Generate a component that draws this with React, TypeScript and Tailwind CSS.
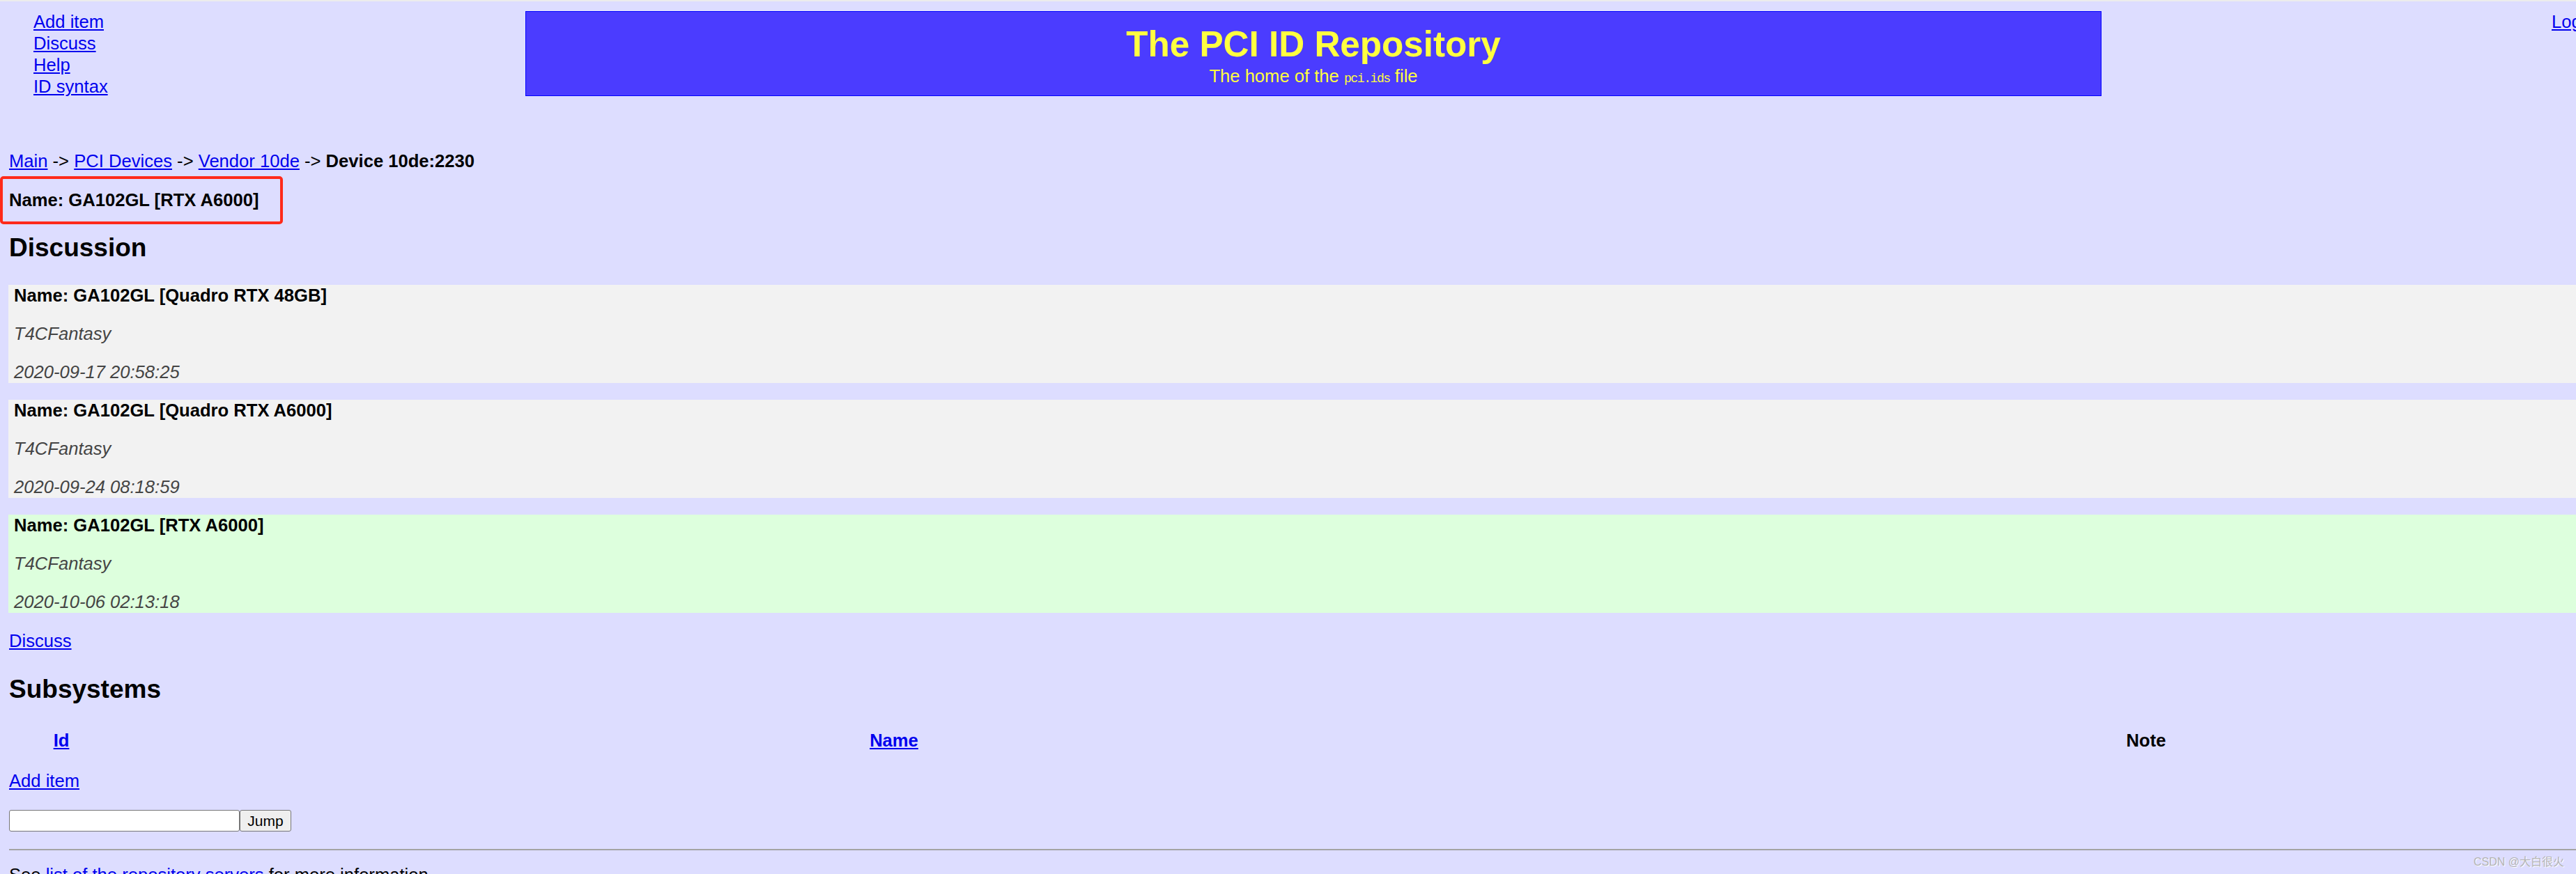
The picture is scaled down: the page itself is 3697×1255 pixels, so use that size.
const link = 'text-[#0000ee] underline'

const comments = [
    { name: 'GA102GL [Quadro RTX 48GB]', author: 'T4CFantasy', time: '2020-09-17 20:58:25', bg: 'bg-[#f2f2f2]' },
    { name: 'GA102GL [Quadro RTX A6000]', author: 'T4CFantasy', time: '2020-09-24 08:18:59', bg: 'bg-[#f2f2f2]' },
    { name: 'GA102GL [RTX A6000]', author: 'T4CFantasy', time: '2020-10-06 02:13:18', bg: 'bg-[#ddffdd]' },
]

function Comment({ name, author, time, bg }: { name: string; author: string; time: string; bg: string }) {
    return (
        <div className={`flex flex-col gap-[24px] pl-[8px] ${bg}`}>
            <p className="font-bold">Name: {name}</p>
            <p className="italic text-[#444]">{author}</p>
            <p className="italic text-[#444]">{time}</p>
        </div>
    )
}

export default function App() {
    return (
        <div className="relative h-[1255px] w-[3697px] overflow-hidden border-t-2 border-[#ececec] bg-[#ddddff] pl-[13px] font-['Liberation_Sans','Noto_Sans_CJK_SC',sans-serif] text-[25.6px] leading-[31px] text-black">
            {/* top bar */}
            <div className="flex w-[3800px] pt-[14px]">
                <nav className="flex w-[741px] flex-col items-start pl-[35px]">
                    <a className={link}>Add item</a>
                    <a className={link}>Discuss</a>
                    <a className={link}>Help</a>
                    <a className={link}>ID syntax</a>
                </nav>

                <div className="h-[122px] w-[2262px] border border-[#0000ff] bg-[#4b3cff] pt-[17px] text-center text-[#ffff40]">
                    <h1 className="text-[51.2px] leading-[60px] font-bold">The PCI ID Repository</h1>
                    <p>
                        The home of the{' '}
                        <code className="font-['Liberation_Mono',monospace] text-[18px] tracking-[-1.4px]">pci.ids</code> file
                    </p>
                </div>

                <div className="ml-[646px] whitespace-nowrap">
                    <a className={link}>Log in</a>
                </div>
            </div>

            <p className="mt-[76px]">
                <a className={link}>Main</a> -&gt; <a className={link}>PCI Devices</a> -&gt;{' '}
                <a className={link}>Vendor 10de</a> -&gt; <b>Device 10de:2230</b>
            </p>

            <p className="relative mt-[25px] font-bold">
                Name: GA102GL [RTX A6000]
                <span className="absolute -left-[13px] -top-[18.6px] h-[69px] w-[406px] rounded-[5px] border-4 border-[#ff2a1a]" />
            </p>

            <h2 className="mt-[30.6px] text-[37px] leading-[44px] font-bold">Discussion</h2>

            <div className="-ml-px mt-[31px] flex flex-col gap-[24px]">
                {comments.map(c => (
                    <Comment key={c.time} {...c} />
                ))}
            </div>

            <p className="mt-[25px]">
                <a className={link}>Discuss</a>
            </p>

            <h2 className="mt-[32.6px] text-[37px] leading-[44px] font-bold">Subsystems</h2>

            <table className="mt-[35.4px] w-[3744px] table-fixed border-collapse">
                <thead>
                    <tr>
                        <th className="w-[150px] p-0 text-center font-bold">
                            <a className={link}>Id</a>
                        </th>
                        <th className="w-[2240px] p-0 text-center font-bold">
                            <a className={link}>Name</a>
                        </th>
                        <th className="w-[1354px] p-0 text-center font-bold">Note</th>
                    </tr>
                </thead>
            </table>

            <p className="mt-[27px]">
                <a className={link}>Add item</a>
            </p>

            <form className="mt-[26.4px] flex" onSubmit={e => e.preventDefault()}>
                <input className="h-[31px] w-[331px] rounded-[3px] border border-[#767676] bg-white px-1 text-[21px]" />
                <button className="h-[31px] w-[74px] rounded-[3px] border border-[#767676] bg-[#efefef] text-[21px] leading-none">
                    Jump
                </button>
            </form>

            <hr className="mt-[25px] border-t-2 border-[#a3a3a3]" />

            <p className="mt-[20px]">
                See <a className={link}>list of the repository servers</a> for more information
            </p>

            {/* watermark */}
            <span className="absolute bottom-[9px] right-[17px] text-[16px] leading-none text-[#b4b4b4] [text-shadow:1px_1px_0_#ffffff]">
                CSDN @大白很火
            </span>
        </div>
    )
}
